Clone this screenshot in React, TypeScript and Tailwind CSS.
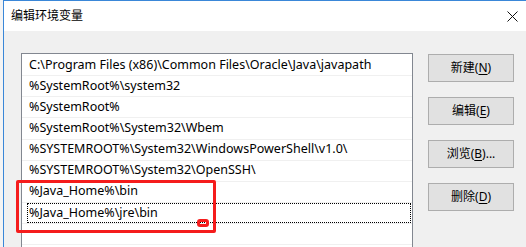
import React from 'react';

const paths = [
  'C:\\Program Files (x86)\\Common Files\\Oracle\\Java\\javapath',
  '%SystemRoot%\\system32',
  '%SystemRoot%',
  '%SystemRoot%\\System32\\Wbem',
  '%SYSTEMROOT%\\System32\\WindowsPowerShell\\v1.0\\',
  '%SYSTEMROOT%\\System32\\OpenSSH\\',
  '%Java_Home%\\bin',
  '%Java_Home%\\jre\\bin',
  '',
  '',
];

const focused = 7;

const buttons = [
  { label: '新建', key: 'N', tail: '' },
  { label: '编辑', key: 'E', tail: '' },
  { label: '浏览', key: 'B', tail: '...' },
  { label: '删除', key: 'D', tail: '' },
];

function WinButton({ label, k, tail }: { label: string; k: string; tail: string }) {
  return (
    <button className="w-[86px] h-[28px] bg-[#e1e1e1] border border-[#adadad] text-[12px] text-black flex items-center justify-center leading-none">
      {label}(<span className="underline underline-offset-2">{k}</span>){tail}
    </button>
  );
}

export default function App() {
  return (
    <div
      className="w-[526px] h-[247px] overflow-hidden bg-white flex"
      style={{ fontFamily: '"Noto Sans", "Noto Sans CJK SC", sans-serif' }}
    >
      <div className="w-[3px] shrink-0 bg-[#f4f4f4]" />
      <div className="flex-1 flex flex-col border-l border-t border-[#3a87d8] min-w-0">
        {/* Title bar */}
        <div className="h-[30px] shrink-0 bg-white flex items-center justify-between pl-[7px] pr-[7px]">
          <span className="text-[12px] text-black">编辑环境变量</span>
          <svg width="11" height="11" viewBox="0 0 11 11" className="mr-[1px]">
            <path d="M0.5 0.5 L10.5 10.5 M10.5 0.5 L0.5 10.5" stroke="#111" strokeWidth="1" />
          </svg>
        </div>

        {/* Body */}
        <div className="flex-1 bg-[#f0f0f0] flex pl-[17px] pt-[22px]">
          <div className="relative w-[392px] shrink-0">
            <div className="h-[260px] bg-white border border-[#828790] pt-[1px]">
              {paths.map((p, i) => (
                <div key={i} className="h-[21.125px] border-b border-[#f0f0f0] pl-[5px] pr-[1px]">
                  <div
                    className={`h-full flex items-center pl-[1px] text-[12.5px] text-black whitespace-nowrap border ${
                      i === focused ? 'border-dotted border-black' : 'border-transparent'
                    }`}
                  >
                    {p}
                  </div>
                </div>
              ))}
            </div>

            {/* red annotation */}
            <div className="absolute left-[-5px] top-[127px] w-[200px] h-[53px] border-[3px] border-[#f51c1c] rounded-[2px]" />
            <div className="absolute left-[176px] top-[166px] w-[12px] h-[8px] border-[3px] border-[#f51c1c] rounded-[3px]" />
          </div>

          <div className="ml-[15px] mt-[1px] flex flex-col">
            <div className="flex flex-col gap-[15px]">
              {buttons.map((b) => (
                <WinButton key={b.key} label={b.label} k={b.key} tail={b.tail} />
              ))}
            </div>
            <div className="mt-[36px]">
              <div className="w-[86px] h-[28px] bg-[#e1e1e1] border border-[#adadad]" />
            </div>
          </div>
        </div>
      </div>
    </div>
  );
}
